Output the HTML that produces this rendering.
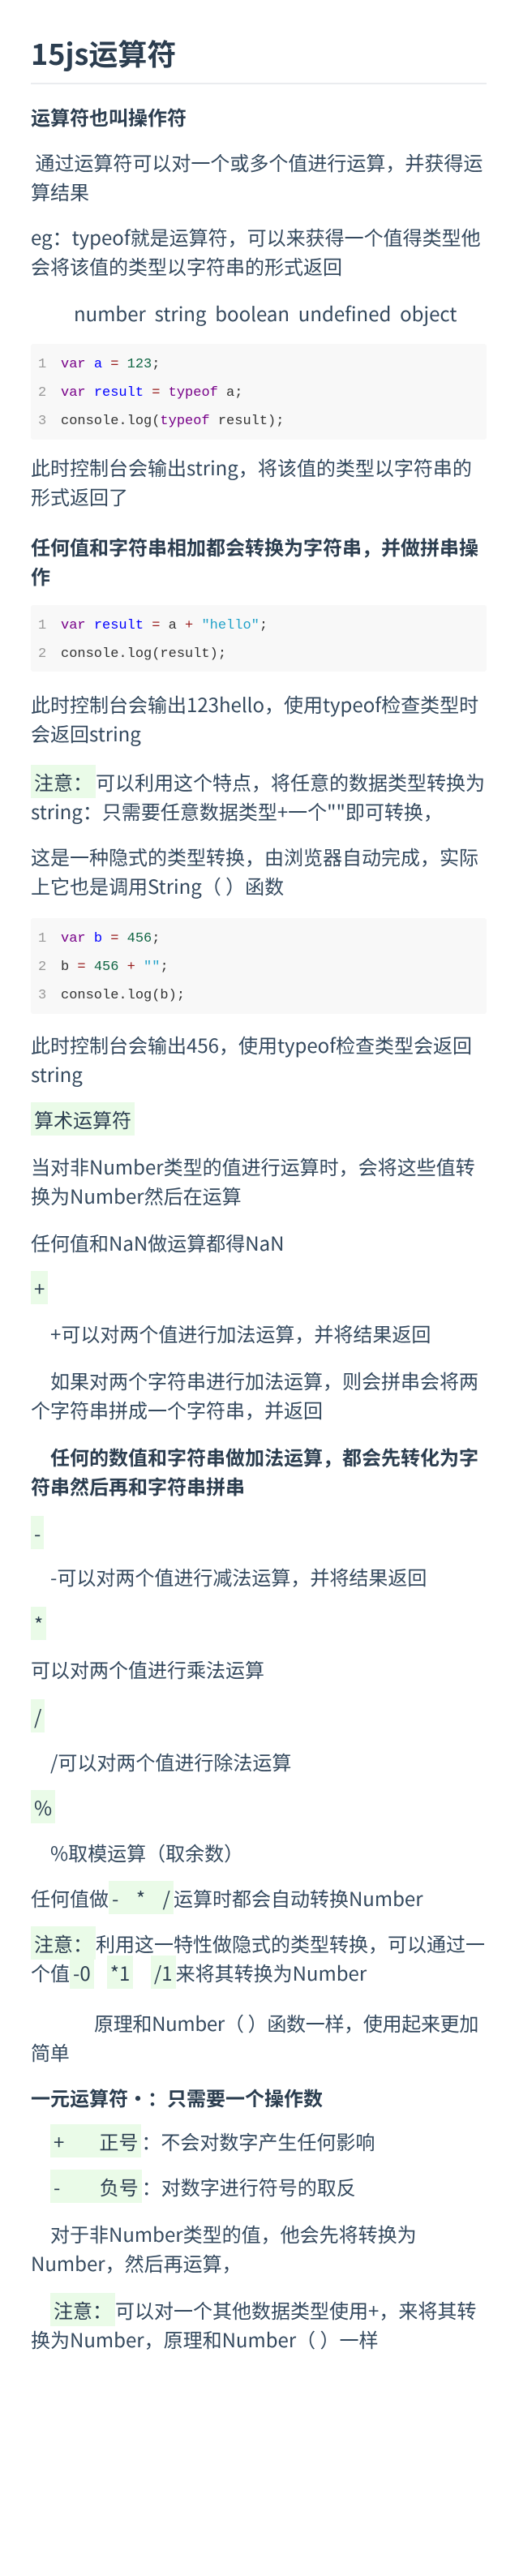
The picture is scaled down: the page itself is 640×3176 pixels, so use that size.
<!DOCTYPE html>
<html><head><meta charset="utf-8">
<style>
html,body{margin:0;padding:0;background:#fff;}
body{width:640px;height:3176px;position:relative;overflow:hidden;font-family:"Noto Sans CJK SC","Liberation Sans",sans-serif;color:#34495e;}
.b{position:absolute;left:38px;width:562px;font-size:24px;line-height:36px;}
.h{font-weight:bold;color:#2c3e50;}
.g{background:#eafbe8;color:#2c3e50;padding:3px 4px;}
.code{position:absolute;left:38px;width:562px;background:#f8f8f8;border-radius:3px;font-family:"Liberation Mono","Noto Serif CJK SC",monospace;font-size:17px;line-height:35px;padding-top:8px;box-sizing:border-box;color:#333;}
.code div{white-space:pre;}
.n{display:inline-block;width:37px;padding-left:9px;color:#999;box-sizing:border-box;}
.k{color:#770088}.v{color:#0000ff}.o{color:#981a1a}.num{color:#116644}.s{color:#22a2c9}
</style></head><body>
<div style="position:absolute;left:38px;top:41px;font-size:36px;line-height:48px;font-weight:bold;color:#2c3e50;">15js运算符</div>
<div style="position:absolute;left:38px;top:102px;width:562px;height:2px;background:#eaecef;"></div>
<div class="b h" style="top:126px;">运算符也叫操作符</div>
<div class="b" style="top:182px;">&nbsp;通过运算符可以对一个或多个值进行运算，并获得运算结果</div>
<div class="b" style="top:274px;">eg：typeof就是运算符，可以来获得一个值得类型他会将该值的类型以字符串的形式返回</div>
<div class="b" style="top:368px;padding-left:53px;box-sizing:border-box;">number&nbsp; string&nbsp; boolean&nbsp; undefined&nbsp; object</div>
<div class="code" style="top:424px;height:118px;">
<div><span class="n">1</span><span class="k">var</span> <span class="v">a</span> <span class="o">=</span> <span class="num">123</span>;</div>
<div><span class="n">2</span><span class="k">var</span> <span class="v">result</span> <span class="o">=</span> <span class="k">typeof</span> a;</div>
<div><span class="n">3</span>console.log(<span class="k">typeof</span> result);</div>
</div>
<div class="b" style="top:558px;">此时控制台会输出string，将该值的类型以字符串的形式返回了</div>
<div class="b h" style="top:656px;">任何值和字符串相加都会转换为字符串，并做拼串操作</div>
<div class="code" style="top:746px;height:82px;">
<div><span class="n">1</span><span class="k">var</span> <span class="v">result</span> <span class="o">=</span> a <span class="o">+</span> <span class="s">"hello"</span>;</div>
<div><span class="n">2</span>console.log(result);</div>
</div>
<div class="b" style="top:850px;">此时控制台会输出123hello，使用typeof检查类型时会返回string</div>
<div class="b" style="top:946px;"><span class="g">注意：</span>可以利用这个特点，将任意的数据类型转换为string：只需要任意数据类型+一个""即可转换，</div>
<div class="b" style="top:1038px;">这是一种隐式的类型转换，由浏览器自动完成，实际上它也是调用String（ ）函数</div>
<div class="code" style="top:1132px;height:118px;">
<div><span class="n">1</span><span class="k">var</span> <span class="v">b</span> <span class="o">=</span> <span class="num">456</span>;</div>
<div><span class="n">2</span>b <span class="o">=</span> <span class="num">456</span> <span class="o">+</span> <span class="s">""</span>;</div>
<div><span class="n">3</span>console.log(b);</div>
</div>
<div class="b" style="top:1270px;">此时控制台会输出456，使用typeof检查类型会返回string</div>
<div class="b" style="top:1362px;"><span class="g">算术运算符</span></div>
<div class="b" style="top:1420px;">当对非Number类型的值进行运算时，会将这些值转换为Number然后在运算</div>
<div class="b" style="top:1514px;">任何值和NaN做运算都得NaN</div>
<div class="b" style="top:1570px;"><span class="g">+</span></div>
<div class="b" style="top:1626px;">　+可以对两个值进行加法运算，并将结果返回</div>
<div class="b" style="top:1684px;">　如果对两个字符串进行加法运算，则会拼串会将两个字符串拼成一个字符串，并返回</div>
<div class="b h" style="top:1778px;">　任何的数值和字符串做加法运算，都会先转化为字符串然后再和字符串拼串</div>
<div class="b" style="top:1872px;"><span class="g">-</span></div>
<div class="b" style="top:1926px;">　-可以对两个值进行减法运算，并将结果返回</div>
<div class="b" style="top:1984px;"><span class="g">*</span></div>
<div class="b" style="top:2040px;">可以对两个值进行乘法运算</div>
<div class="b" style="top:2098px;"><span class="g">/</span></div>
<div class="b" style="top:2154px;">　/可以对两个值进行除法运算</div>
<div class="b" style="top:2210px;"><span class="g">%</span></div>
<div class="b" style="top:2266px;">　%取模运算（取余数）</div>
<div class="b" style="top:2322px;">任何值做<span class="g">-&nbsp;&nbsp;&nbsp; *&nbsp;&nbsp;&nbsp; /</span>运算时都会自动转换Number</div>
<div class="b" style="top:2378px;"><span class="g">注意：</span>利用这一特性做隐式的类型转换，可以通过一个值<span class="g">-0</span>&nbsp;&nbsp; <span class="g">*1</span>&nbsp;&nbsp;&nbsp; <span class="g">/1</span>来将其转换为Number</div>
<div class="b" style="top:2476px;width:566px;text-indent:78px;letter-spacing:-0.3px;">原理和Number（ ）函数一样，使用起来更加简单</div>
<div class="b h" style="top:2568px;">一元运算符·：只需要一个操作数</div>
<div class="b" style="top:2622px;">　<span class="g">+&nbsp;&nbsp;&nbsp;&nbsp;&nbsp;&nbsp;&nbsp; 正号</span>：不会对数字产生任何影响</div>
<div class="b" style="top:2678px;">　<span class="g">-&nbsp;&nbsp;&nbsp;&nbsp;&nbsp;&nbsp;&nbsp;&nbsp; 负号</span>：对数字进行符号的取反</div>
<div class="b" style="top:2736px;">　对于非Number类型的值，他会先将转换为Number，然后再运算，</div>
<div class="b" style="top:2830px;">　<span class="g">注意：</span>可以对一个其他数据类型使用+，来将其转换为Number，原理和Number（ ）一样</div>
</body></html>
